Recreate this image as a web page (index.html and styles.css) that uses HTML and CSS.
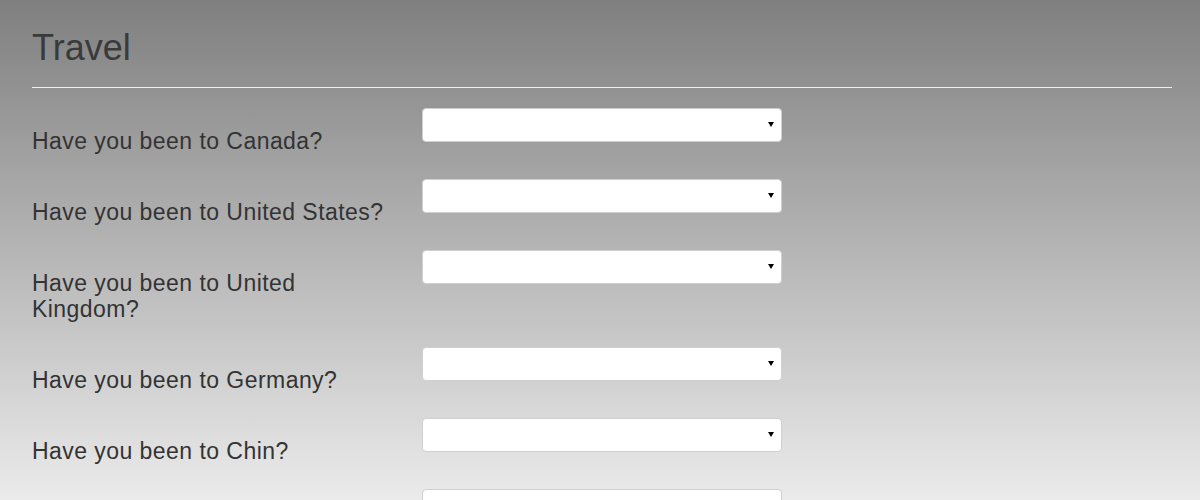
FILE: index.html
```html
<!DOCTYPE html>
<html lang="en">
<head>
<meta charset="utf-8">
<title>Travel</title>
<link rel="stylesheet" href="styles.css">
</head>
<body>
<div class="page">
  <h1 class="title">Travel</h1>
  <form class="form">
    <div class="row">
      <label class="label" for="q1">Have you been to Canada?</label>
      <div class="select-wrap"><select id="q1" class="select"><option></option><option>Yes</option><option>No</option></select></div>
    </div>
    <div class="row">
      <label class="label" for="q2">Have you been to United States?</label>
      <div class="select-wrap"><select id="q2" class="select"><option></option><option>Yes</option><option>No</option></select></div>
    </div>
    <div class="row">
      <label class="label" for="q3">Have you been to United Kingdom?</label>
      <div class="select-wrap"><select id="q3" class="select"><option></option><option>Yes</option><option>No</option></select></div>
    </div>
    <div class="row">
      <label class="label" for="q4">Have you been to Germany?</label>
      <div class="select-wrap"><select id="q4" class="select"><option></option><option>Yes</option><option>No</option></select></div>
    </div>
    <div class="row">
      <label class="label" for="q5">Have you been to Chin?</label>
      <div class="select-wrap"><select id="q5" class="select"><option></option><option>Yes</option><option>No</option></select></div>
    </div>
    <div class="row">
      <label class="label" for="q6">Have you been to Japan?</label>
      <div class="select-wrap"><select id="q6" class="select"><option></option><option>Yes</option><option>No</option></select></div>
    </div>
  </form>
</div>
</body>
</html>
```
FILE: styles.css
```css
html {
  height: 100%;
  background: linear-gradient(to bottom, #7f7f7f 0px, #ebebeb 500px) no-repeat;
  background-color: #ebebeb;
}
body {
  margin: 0;
  font-family: "Liberation Sans", Arial, sans-serif;
  color: #333;
}
.page {
  padding: 0 28px 0 32px;
}
.title {
  margin: 0;
  padding: 28px 0 19px;
  font-size: 36px;
  line-height: 40px;
  font-weight: 400;
  color: #3a3a3a;
  border-bottom: 1px solid #f0f0f0;
}
.form {
  padding-top: 20px;
}
.row {
  display: flex;
  align-items: flex-start;
  margin-bottom: 25px;
}
.label {
  width: 360px;
  margin-right: 30px;
  padding-top: 20px;
  font-size: 23px;
  line-height: 26px;
  letter-spacing: 0.45px;
  color: #333;
}
.select-wrap {
  position: relative;
  width: 360px;
}
.select {
  display: block;
  width: 100%;
  height: 34px;
  margin: 0;
  padding: 0 20px 0 10px;
  border: 1px solid #cfcfcf;
  border-radius: 4px;
  background: #fff;
  font-family: inherit;
  font-size: 14px;
  color: #555;
  -webkit-appearance: none;
  appearance: none;
  box-sizing: border-box;
}
.select-wrap::after {
  content: "";
  position: absolute;
  right: 8px;
  top: 14px;
  width: 0;
  height: 0;
  border-left: 3px solid transparent;
  border-right: 3px solid transparent;
  border-top: 5px solid #000;
  pointer-events: none;
}
```
